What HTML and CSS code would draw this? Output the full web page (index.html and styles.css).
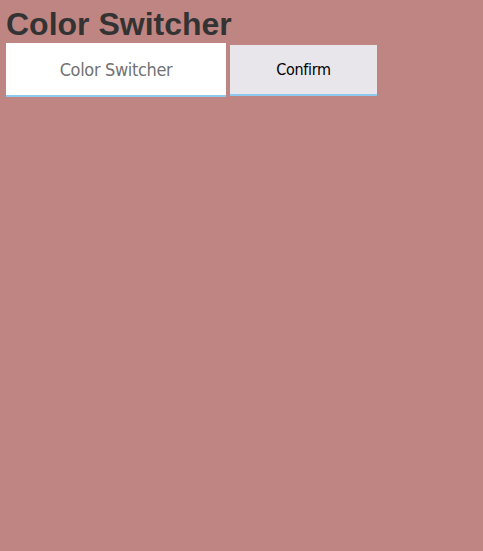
FILE: index.html
```html
<!DOCTYPE html>
<html>
<head>
<meta charset="utf-8">
<link rel="stylesheet" href="styles.css">
</head>
<body>
<h1 class="title">Color Switcher</h1>
<div class="controls">
  <input class="color-input" type="text" placeholder="Color Switcher">
  <button class="confirm-btn" type="button">Confirm</button>
</div>
</body>
</html>
```
FILE: styles.css
```css
html, body {
  background: #bf8582;
}
body {
  margin: 0;
  padding: 6px;
  font-family: "Liberation Sans", Arial, sans-serif;
}
.title {
  margin: 0;
  font-size: 32px;
  font-weight: bold;
  color: #333333;
  line-height: 37px;
}
.controls {
  display: flex;
  align-items: flex-start;
  gap: 4px;
}
.color-input {
  box-sizing: border-box;
  width: 220px;
  height: 54px;
  margin: 0;
  padding: 0 10px;
  border: none;
  border-bottom: 2px solid #8ecaf0;
  background: #ffffff;
  text-align: center;
  font-family: "DejaVu Sans Condensed", "DejaVu Sans", sans-serif;
  font-size: 18px;
  letter-spacing: -0.35px;
  color: #666;
  outline: none;
}
.color-input::placeholder {
  color: #727272;
}
.confirm-btn {
  box-sizing: border-box;
  width: 147px;
  height: 51px;
  margin: 2px 0 0;
  padding: 0;
  border: none;
  border-bottom: 2px solid #8ecaf0;
  background: #e8e6eb;
  font-family: "DejaVu Sans Condensed", "DejaVu Sans", sans-serif;
  font-size: 16px;
  letter-spacing: -0.3px;
  color: #000;
}
```
